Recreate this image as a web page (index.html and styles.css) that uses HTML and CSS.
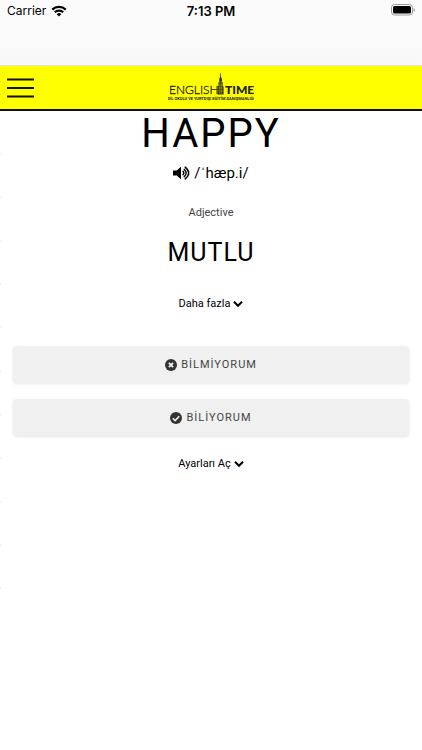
FILE: index.html
```html
<!DOCTYPE html>
<html lang="tr">
<head>
<meta charset="utf-8">
<meta name="viewport" content="width=device-width, initial-scale=1">
<title>English Time</title>
<link rel="stylesheet" href="styles.css">
</head>
<body>
<div class="status">
  <span class="carrier">Carrier
    <svg width="16" height="12" viewBox="0 0 15 12" aria-hidden="true"><g fill="none" stroke="#000" stroke-width="2.200"><path d="M.8 4.600a9.500 9.500 0 0 1 13.400 0"/><path d="M3.300 7.300a5.900 5.900 0 0 1 8.400 0"/></g><path d="M5.200 9.200a3.300 3.300 0 0 1 4.600 0L7.500 11.600z"/></svg>
  </span>
  <span class="clock">7:13 PM</span>
  <svg class="battery" width="24" height="12" viewBox="0 0 24 12" aria-hidden="true"><rect x=".5" y=".5" width="21" height="10.500" rx="3" fill="#fff" stroke="#999"/><rect x="2" y="2" width="18" height="7.500" rx="1.500"/><path d="M22.600 4v4q1.300-.6 1.300-2t-1.300-2z" fill="#999"/></svg>
</div>
<header class="bar">
  <button class="menu" aria-label="Menü"><svg width="27" height="20" viewBox="0 0 27 20"><path d="M0 1.500h27M0 10h27M0 18.500h27" stroke="#111" stroke-width="2"/></svg></button>
  <a class="logo" href="#" aria-label="English Time">
    <svg width="86" height="30" viewBox="0 0 86 30">
      <text class="logo-thin" x="1" y="21">ENGLISH</text>
      <path d="M52.300 0h.5l.2 4 1 2v3l.8.6V13l.8.700v7.800h-6v-7.800l.8-.7V9.600l.8-.6V6l.9-2z" fill="#333300"/>
      <path d="M51.800 8v13M53.400 8v13M50 12h5M49.600 15h6M49.600 18h6" stroke="#bbbb00" stroke-width=".5"/>
      <text class="logo-bold" x="57" y="21">TIME</text>
      <text class="logo-sub" x="43" y="27" text-anchor="middle">DİL OKULU VE YURTDIŞI EĞİTİM DANIŞMANLIĞI</text>
    </svg>
  </a>
</header>
<main class="card">
  <h1>HAPPY</h1>
  <button class="say">
    <svg width="17" height="14" viewBox="0 0 17 14" aria-hidden="true"><path d="M0 4.500h3.700L8 .7v12.600L3.700 9.500H0z"/><g fill="none" stroke="#000" stroke-width="1.400" stroke-linecap="round"><path d="M10 5.300q1.700 1.700 0 3.400"/><path d="M11.200 3.200q4 3.800 0 7.600"/><path d="M12.200 1.100q7 5.900 0 11.800"/></g></svg>
    <span>/ˈhæp.i/</span>
  </button>
  <p class="kind">Adjective</p>
  <h2>MUTLU</h2>
  <button class="link">Daha fazla
    <svg width="10" height="8" viewBox="0 0 10 8" aria-hidden="true"><path d="M1 1.800l4 4 4-4" fill="none" stroke="#000" stroke-width="2"/></svg>
  </button>
  <div class="answers">
    <button class="answer"><svg width="12" height="12" viewBox="0 0 12 12" aria-hidden="true"><circle cx="6" cy="6" r="6" fill="#333"/><path d="M3.900 3.900l4.200 4.200M8.100 3.900L3.900 8.100" stroke="#f0f0f0" stroke-width="1.800"/></svg>BİLMİYORUM</button>
    <button class="answer"><svg width="12" height="12" viewBox="0 0 12 12" aria-hidden="true"><circle cx="6" cy="6" r="6" fill="#333"/><path d="M2.800 6.200l2.300 2.300 4.200-4.300" fill="none" stroke="#f0f0f0" stroke-width="1.600"/></svg>BİLİYORUM</button>
  </div>
  <button class="link">Ayarları Aç
    <svg width="10" height="8" viewBox="0 0 10 8" aria-hidden="true"><path d="M1 1.800l4 4 4-4" fill="none" stroke="#000" stroke-width="2"/></svg>
  </button>
</main>
</body>
</html>
```
FILE: styles.css
```css
* { box-sizing: border-box; }
body {
  margin: 0;
  background: #fff;
  color: #000;
  font-family: Roboto, "Liberation Sans", sans-serif;
}
button {
  border: 0;
  padding: 0;
  background: none;
  color: inherit;
  font: inherit;
}
svg { display: block; flex: none; }

.status {
  display: grid;
  grid-template-columns: 1fr auto 1fr;
  align-items: start;
  height: 66px;
  padding: 4px 7px 0;
  background: linear-gradient(#fcfcfc, #f8f8f8);
  border-bottom: 1px solid #e4e4c8;
  font: 12px/14px Inter, sans-serif;
}
.carrier { display: flex; align-items: center; gap: 5px; }
.clock { font-size: 13px; font-weight: 600; }
.battery { justify-self: end; }

.bar {
  display: grid;
  grid-template-columns: 1fr auto 1fr;
  align-items: center;
  height: 45px;
  padding: 0 7px;
  background: #ff0;
  border-bottom: 2px solid #111;
}
.menu { justify-self: start; }
.logo text { fill: #222200; }
.logo-thin { font: 300 12px Lato, sans-serif; stroke: #222200; stroke-width: .3px; }
.logo-bold { font: 900 12px Lato, sans-serif; }
.logo-sub { font: 700 4px/4px Roboto, sans-serif; }

.card {
  display: flex;
  flex-direction: column;
  align-items: center;
  padding: 0 13px;
  min-height: 478px;
  background: linear-gradient(transparent 42px, #ddd 42px) left top / 1px 43px;
  background-repeat: no-repeat round;
}
h1 {
  margin: 0;
  font-size: 40px;
  line-height: 46px;
  font-weight: 400;
  letter-spacing: 2px;
}
.say {
  display: flex;
  align-items: center;
  gap: 4px;
  margin-top: 4px;
  font-size: 15px;
  line-height: 24px;
}
.kind {
  margin: 20px 0 0;
  color: #444;
  font-size: 11px;
  line-height: 16px;
}
h2 {
  margin: 16px 0 0;
  font-size: 25px;
  line-height: 32px;
  font-weight: 400;
  letter-spacing: 1px;
}
.link {
  display: flex;
  align-items: center;
  gap: 3px;
  margin-top: 27px;
  font-size: 11px;
  line-height: 16px;
}
.answers {
  display: grid;
  gap: 16px;
  width: 100%;
  margin-top: 34px;
}
.answer {
  display: flex;
  align-items: center;
  justify-content: center;
  gap: 4px;
  height: 37px;
  border-radius: 4px;
  background: #f0f0f0;
  box-shadow: 0 1px 3px rgba(0, 0, 0, .1);
  color: #444;
  font-size: 11px;
  letter-spacing: 1px;
}
.answers + .link { margin-top: 20px; }
```
